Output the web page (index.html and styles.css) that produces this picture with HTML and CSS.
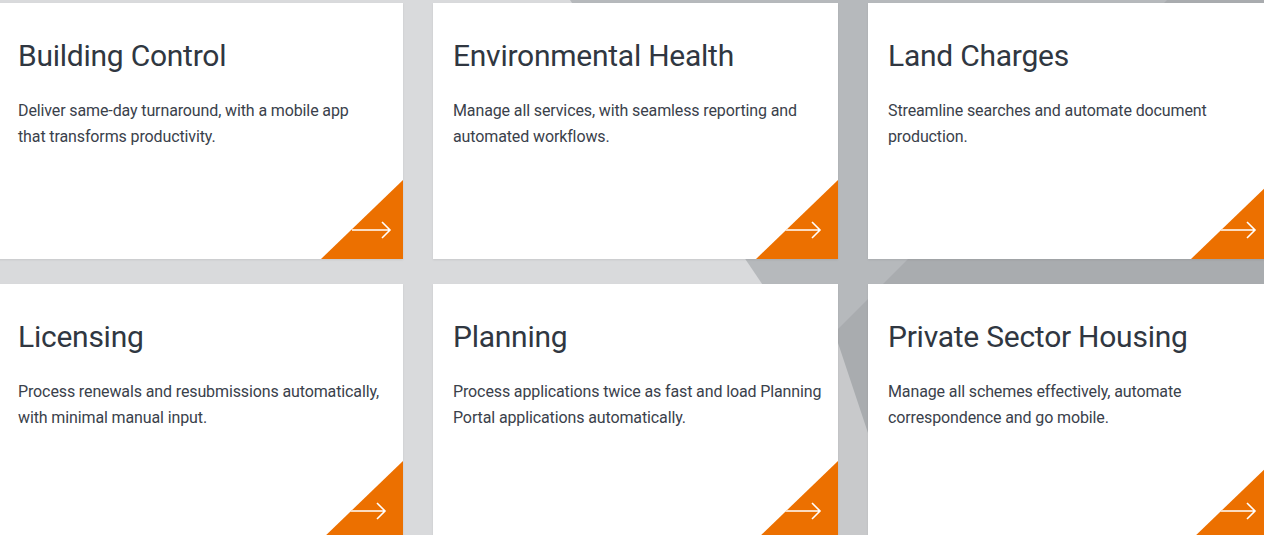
FILE: index.html
```html
<!DOCTYPE html>
<html lang="en">
<head>
<meta charset="utf-8">
<title>Services</title>
<link rel="stylesheet" href="styles.css">
</head>
<body>
<main class="page">
  <svg class="backdrop" viewBox="0 0 1264 535" preserveAspectRatio="none" aria-hidden="true">
    <rect x="0" y="0" width="1264" height="535" fill="#d9dadc"/>
    <polygon points="570,0 1264,0 1264,535 932,535" fill="#b6b9bc"/>
    <polygon points="1167,0 1264,0 1264,535 632,535" fill="#a9acaf"/>
    <polygon points="820,289 890,499 890,535 820,535" fill="#c8c9cb"/>
  </svg>
  <section class="grid">
    <a class="card card--active" href="#">
      <h2 class="card-title">Building Control</h2>
      <p class="card-text">Deliver same-day turnaround, with a mobile app<br>that transforms productivity.</p>
      <span class="corner"><svg class="arrow" viewBox="0 0 40 20"><path d="M0 10H38M30 2L38 10L30 18"/></svg></span>
    </a>
    <a class="card" href="#">
      <h2 class="card-title">Environmental Health</h2>
      <p class="card-text">Manage all services, with seamless reporting and<br>automated workflows.</p>
      <span class="corner"><svg class="arrow" viewBox="0 0 40 20"><path d="M0 10H38M30 2L38 10L30 18"/></svg></span>
    </a>
    <a class="card" href="#">
      <h2 class="card-title">Land Charges</h2>
      <p class="card-text">Streamline searches and automate document<br>production.</p>
      <span class="corner"><svg class="arrow" viewBox="0 0 40 20"><path d="M0 10H38M30 2L38 10L30 18"/></svg></span>
    </a>
    <a class="card" href="#">
      <h2 class="card-title">Licensing</h2>
      <p class="card-text">Process renewals and resubmissions automatically,<br>with minimal manual input.</p>
      <span class="corner"><svg class="arrow" viewBox="0 0 40 20"><path d="M0 10H38M30 2L38 10L30 18"/></svg></span>
    </a>
    <a class="card" href="#">
      <h2 class="card-title">Planning</h2>
      <p class="card-text">Process applications twice as fast and load Planning<br>Portal applications automatically.</p>
      <span class="corner"><svg class="arrow" viewBox="0 0 40 20"><path d="M0 10H38M30 2L38 10L30 18"/></svg></span>
    </a>
    <a class="card" href="#">
      <h2 class="card-title">Private Sector Housing</h2>
      <p class="card-text">Manage all schemes effectively, automate<br>correspondence and go mobile.</p>
      <span class="corner"><svg class="arrow" viewBox="0 0 40 20"><path d="M0 10H38M30 2L38 10L30 18"/></svg></span>
    </a>
  </section>
</main>
</body>
</html>
```
FILE: styles.css
```css
* { box-sizing: border-box; }

html, body {
  margin: 0;
  padding: 0;
  background: #d9dadc;
  overflow: hidden;
}

body {
  font-family: Roboto, "Liberation Sans", Arial, sans-serif;
  color: #343b45;
}

.page {
  position: relative;
  width: 1264px;
  height: 535px;
  overflow: hidden;
}

.backdrop {
  position: absolute;
  top: 0;
  left: 0;
  width: 1264px;
  height: 535px;
  display: block;
}

.grid {
  position: relative;
  display: grid;
  grid-template-columns: 405px 405px 405px;
  grid-auto-rows: 256px;
  column-gap: 30px;
  row-gap: 25px;
  padding-top: 3px;
  margin-left: -2px;
  width: 1280px;
}

.card {
  position: relative;
  display: block;
  background: #ffffff;
  padding: 35px 10px 0 20px;
  text-decoration: none;
  color: inherit;
  overflow: hidden;
  box-shadow: 0 1px 2px rgba(0, 0, 0, 0.08);
}

.card-title {
  margin: 0;
  font-size: 30px;
  line-height: 36px;
  font-weight: 400;
  letter-spacing: -0.25px;
  color: #303741;
  white-space: nowrap;
}

.card-text {
  margin: 24px 0 0;
  font-size: 16px;
  line-height: 26px;
  letter-spacing: -0.12px;
  color: #3a414b;
  white-space: nowrap;
}

.corner {
  position: absolute;
  right: 0;
  bottom: 0;
  width: 82px;
  height: 79px;
  background: #ec7000;
  clip-path: polygon(100% 0, 100% 100%, 0 100%);
}

.arrow {
  position: absolute;
  left: 26px;
  top: 40px;
  width: 40px;
  height: 20px;
  fill: none;
  stroke: #ffffff;
  stroke-width: 1.6;
}

.card--active .arrow {
  left: 31px;
}
```
